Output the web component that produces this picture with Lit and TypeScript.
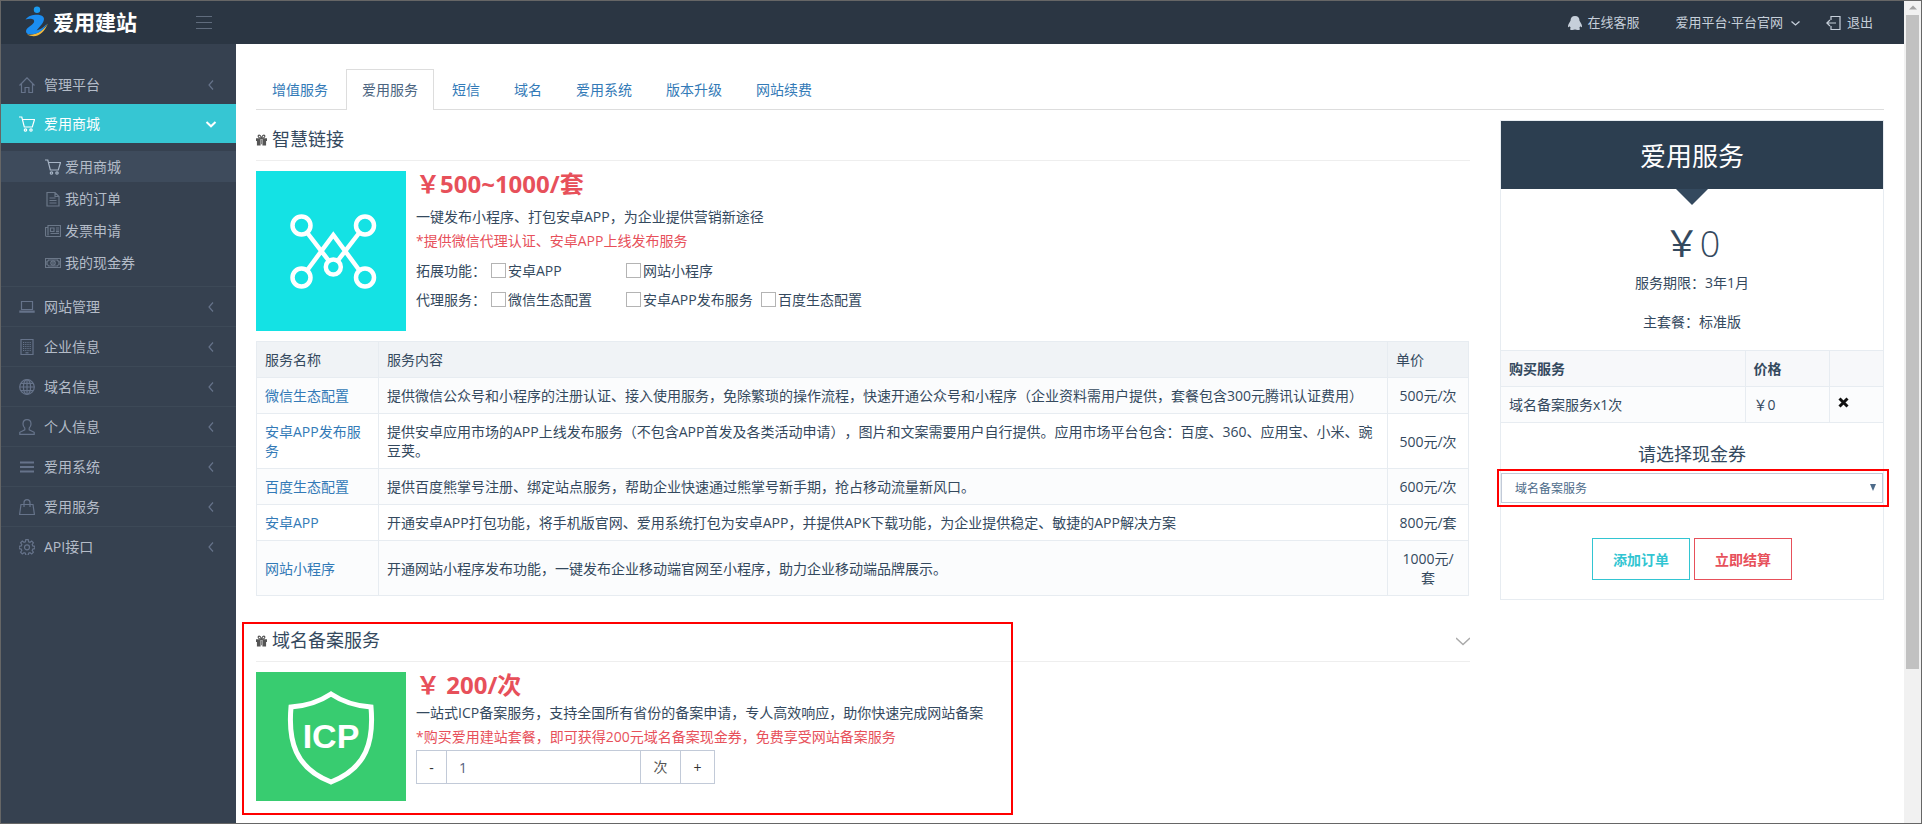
import { LitElement, html, css, svg } from "lit";
import { customElement, state } from "lit/decorators.js";

const line = (d: any, cls = "ico") => html`<svg class=${cls} viewBox="0 0 16 16" aria-hidden="true">${d}</svg>`;

const icons: Record<string, any> = {
  home: svg`<path d="M.5 8.500 8 .8l7.500 7.700M2.500 7v8.500h3.600v-5h3.800v5h3.600V7"/>`,
  cart: svg`<path d="M0 1h2.800l2.500 10h8l2.200-7.500H3.500"/><circle cx="6.500" cy="14" r="1.200"/><circle cx="12" cy="14" r="1.200"/>`,
  doc: svg`<path d="M2 1.500h8l4 4v9.500H2zM10 1.500v4h4M4.500 7h6M4.500 9.500h7M4.500 12h7"/>`,
  news: svg`<path d="M3 2.500h12.500v11H2q-1.500 0-1.500-1.500V4.500H3zM3 4.500v8M5.500 5h3.500v3.500H5.500zM11 5h3M11 7h3M5.500 10.500H14M11 8.700h3"/>`,
  cash: svg`<path d="M.5 3.500h15v9H.5zM2 6.500q1.200-.3 1.500-1.500h9q.3 1.200 1.500 1.500v3q-1.200.3-1.500 1.500h-9Q3.200 9.800 2 9.500z"/><circle cx="8" cy="8" r="2.200"/><path d="M8 6.800v2.400"/>`,
  laptop: svg`<path d="M2.500 2.500h11v8h-11zM.3 13.200h15.400M.3 12h15.400"/>`,
  building: svg`<path d="M2 .5h12v15H2z"/><path stroke-dasharray="1.200 1" d="M4 3.500h8.500M4 5.500h8.500M4 7.500h8.500M4 9.500h8.500M4 11.500h8.500"/><path d="M6.500 13.800h3"/>`,
  globe: svg`<circle cx="8" cy="8" r="7.300"/><ellipse cx="8" cy="8" rx="3.600" ry="7.300"/><path d="M8 .7v14.600M.7 8h14.600M1.800 4.300h12.400M1.800 11.700h12.400"/>`,
  user: svg`<path d="M8 .6c-2.500 0-4 1.900-4 4.300 0 2 .9 3.300 1.800 4.300v1.600L.8 13.300v2.100h14.400v-2.100l-5-2.500V9.200C11.100 8.200 12 6.900 12 4.900 12 2.500 10.500.6 8 .6z"/>`,
  bars: svg`<path stroke-width="2" d="M1 3.500h14M1 8h14M1 12.500h14"/>`,
  bag: svg`<path d="M2 5.500h12l1.400 10H.6zM5 8V3.700C5 1.800 6.200.6 8 .6s3 1.200 3 3.100V8"/>`,
  gear: svg`<path d="M6.800.7h2.400l.4 2 1.400.6 1.700-1.200 1.700 1.700-1.200 1.700.6 1.400 2 .4v2.400l-2 .4-.6 1.400 1.200 1.700-1.700 1.700-1.700-1.200-1.400.6-.4 2H6.800l-.4-2-1.400-.6-1.700 1.200-1.700-1.700 1.200-1.700-.6-1.400-2-.4V7.300l2-.4.6-1.400-1.200-1.700 1.700-1.700L5 3.300l1.400-.6z"/><circle cx="8" cy="8.300" r="2.500"/>`,
  left: svg`<path d="M10 3.500 6 8l4 4.500"/>`,
  down: svg`<path stroke-width="2" d="M3.500 6 8 10.300 12.500 6"/>`,
  logout: svg`<path d="M5 5V1.500h9v13H5V11M.8 8H10M4 5 .8 8 4 11"/>`,
};

const gift = html`<svg class="gift" viewBox="0 0 12 12" aria-hidden="true">
  <path d="M0 4h5V3h2v1h5v3h-1v5H7V5H5v7H1V7H0z" fill="#555"/>
  <path d="M6 4C2 4 1.500.7 3.500.7 5 .7 5.500 2.500 6 4c.5-1.500 1-3.300 2.500-3.300C10.500.7 10 4 6 4z" fill="none" stroke="#555" stroke-width="1.200"/>
  <path d="M5.500 5.500h1v5h-1z" fill="#777"/></svg>`;

const MENU: [string, string][] = [
  ["laptop", "网站管理"], ["building", "企业信息"], ["globe", "域名信息"], ["user", "个人信息"],
  ["bars", "爱用系统"], ["bag", "爱用服务"], ["gear", "API接口"],
];
const SUB: [string, string][] = [["cart", "爱用商城"], ["doc", "我的订单"], ["news", "发票申请"], ["cash", "我的现金券"]];
const TABS = ["增值服务", "爱用服务", "短信", "域名", "爱用系统", "版本升级", "网站续费"];
const ROWS = [
  ["微信生态配置", "提供微信公众号和小程序的注册认证、接入使用服务，免除繁琐的操作流程，快速开通公众号和小程序（企业资料需用户提供，套餐包含300元腾讯认证费用）", "500元/次"],
  ["安卓APP发布服务", "提供安卓应用市场的APP上线发布服务（不包含APP首发及各类活动申请），图片和文案需要用户自行提供。应用市场平台包含：百度、360、应用宝、小米、豌豆荚。", "500元/次"],
  ["百度生态配置", "提供百度熊掌号注册、绑定站点服务，帮助企业快速通过熊掌号新手期，抢占移动流量新风口。", "600元/次"],
  ["安卓APP", "开通安卓APP打包功能，将手机版官网、爱用系统打包为安卓APP，并提供APK下载功能，为企业提供稳定、敏捷的APP解决方案", "800元/套"],
  ["网站小程序", "开通网站小程序发布功能，一键发布企业移动端官网至小程序，助力企业移动端品牌展示。", "1000元/套"],
];

@customElement("app-root")
export class AppRoot extends LitElement {
  @state() private tab = 1;
  @state() private count = 1;

  static styles = css`
    :host { display: block; font: 14px/19px "Open Sans", "Noto Sans CJK SC", sans-serif; color: #34495e; text-spacing-trim: space-all; }
    * { box-sizing: border-box; }
    a { color: inherit; text-decoration: none; }
    h1, h2, h3, p, ul { margin: 0; padding: 0; font-weight: 400; }
    ul { list-style: none; }
    button, input, select { font: inherit; margin: 0; border-radius: 0; }
    svg { display: block; flex: none; }
    .ico { width: 16px; height: 16px; fill: none; stroke: currentColor; stroke-width: 1.2; }
    .frame { display: flex; height: 100vh; border: 1px solid #666; overflow: hidden; background: #fff; }
    .app { flex: 1; min-width: 0; display: flex; flex-direction: column; }
    .top { display: flex; align-items: center; height: 43px; flex: none; background: #2b3643; color: #c6cfda; font-size: 13px; padding-right: 31px; }
    .brand { display: flex; align-items: center; gap: 4px; width: 195px; padding-left: 22px; color: #fff; }
    .brand svg { width: 26px; height: 34px; }
    .brand span { font-size: 21px; line-height: 30px; font-weight: 700; padding-bottom: 2px; }
    .burger { display: block; border: 0; padding: 0; background: none; color: #606c7d; }
    .burger svg { width: 16px; height: 16px; stroke: currentColor; }
    .nav { margin-left: auto; display: flex; align-items: center; }
    .nav a { display: flex; align-items: center; gap: 6px; margin-left: 36px; }
    .nav a:last-child { margin-left: 25px; gap: 5px; }
    .body { flex: 1; min-height: 0; display: flex; }
    .side { width: 235px; flex: none; background: #364150; color: #b4bcc8; padding-top: 20px; }
    .item { display: flex; align-items: center; height: 40px; padding: 0 17px 0 18px; border-top: 1px solid #3d4957; }
    .item .ico { color: #66738a; }
    .item span { flex: 1; margin-left: 9px; }
    .item.first { border-top-color: #364150; }
    .item.on { height: 39px; background: #36c6d3; border: 0; color: #fff; }
    .item.on .ico { color: #fff; }
    .sub { padding: 8px 0 7px; }
    .sub a { display: flex; align-items: center; gap: 4px; height: 31px; margin-bottom: 1px; padding-left: 44px; }
    .sub a .ico { color: #6b7788; }
    .sub a.on { background: #3e4b5c; }
    .sub a.on .ico { color: #a7b5c6; }
    .main { flex: 1; min-width: 0; padding: 25px 20px 0; overflow: hidden; }
    .tabs { display: flex; gap: 2px; border-bottom: 1px solid #ddd; }
    .tab { height: 40px; padding: 0 15px; border: 1px solid transparent; border-bottom: 0; background: none; color: #337ab7; cursor: pointer; margin-bottom: -1px; }
    .tab.on { border-color: #ddd; background: #fff; color: #4b6480; height: 41px; padding-bottom: 2px; }
    .cols { display: flex; align-items: flex-start; justify-content: space-between; gap: 30px; }
    .left { flex: 1; min-width: 0; }
    .head { display: flex; align-items: center; gap: 5px; height: 41px; border-bottom: 1px solid #eee; margin-bottom: 10px; }
    .left > .head { margin-top: 10px; }
    .head h2 { font-size: 18px; line-height: 26px; flex: 1; padding-bottom: 2px; }
    .gift { width: 11px; height: 12px; }
    .offer { display: flex; gap: 10px; }
    .pic { width: 150px; height: 160px; }
    .pic.short { height: 129px; }
    .price { font-size: 24px; line-height: 26px; font-weight: 700; color: #e7505a; }
    .info p { line-height: 24px; }
    .info .gap { margin-top: 8px; }
    .info .near { margin-top: 3px; }
    .red { color: #e7505a; }
    .opts { display: grid; grid-template-columns: 75px 135px 135px 135px; align-items: center; height: 29px; }
    .opts.a { margin-top: 3px; }
    .opts label { display: flex; align-items: center; gap: 2px; white-space: nowrap; }
    .opts input { appearance: none; width: 15px; height: 15px; border: 1px solid #b4b4b4; background: #fff; }
    .opts input:checked { background: #36c6d3; }
    table { border-collapse: collapse; width: 100%; table-layout: fixed; }
    th, td { border: 1px solid #e7ecf1; padding: 8px; text-align: left; font-weight: 400; }
    .svc { margin-top: 10px; width: calc(100% - 1px); }
    .svc th { background: #f0f3f6; }
    .svc tbody tr:nth-child(odd) { background: #fbfcfd; }
    .svc td a { color: #337ab7; }
    .svc td:last-child { text-align: center; }
    .c1 { width: 122px; } .c3 { width: 81px; }
    .domain { margin-top: 25px; position: relative; }
    .mark { position: absolute; border: 2px solid #f00; pointer-events: none; }
    .domain .mark { left: -14px; top: 1px; width: 771px; height: 193px; }
    .stepper { display: flex; width: 299px; height: 34px; margin-top: 1px; }
    .stepper > * { border: 1px solid #c2cad8; background: #fff; color: #333; text-align: center; padding: 0; width: 34px; }
    .stepper > :first-child { width: 31px; }
    .stepper input { flex: 1; min-width: 0; width: auto; text-align: left; padding: 0 12px; color: #555f80; border-left: 0; }
    .stepper span { width: 40px; line-height: 32px; color: #555; border-left: 0; }
    .stepper > :last-child { border-left: 0; }
    .card { width: 384px; flex: none; margin-top: 10px; border: 1px solid #e7ecf1; text-align: center; padding-bottom: 19px; }
    .card h1 { background: #2c3e50; color: #fff; font-size: 26px; line-height: 66px; padding-top: 2px; }
    .tri { width: 32px; height: 16px; margin: 0 auto; background: #34495e; clip-path: polygon(0 0, 100% 0, 50% 100%); }
    .total { font-size: 36px; line-height: 48px; font-weight: 300; margin-top: 15px; }
    .total span { font-weight: 400; }
    .card .t1 { margin-top: 5px; }
    .card .t2 { margin-top: 20px; }
    .cart { margin-top: 19px; }
    .cart th { background: #f7f8fa; font-weight: 700; }
    .cart td { background: #fbfcfd; }
    .cart tr > :first-child { border-left-width: 0; }
    .cart tr > :last-child { border-right-width: 0; }
    .k2 { width: 84px; } .k3 { width: 54px; }
    .x { border: 0; background: none; padding: 0; display: block; color: #111; }
    .x svg { width: 11px; height: 11px; margin-bottom: 4px; }
    .card h3 { font-size: 18px; line-height: 24px; margin-top: 19px; }
    .pick { position: relative; margin-top: 7px; display: block; }
    .pick select { appearance: none; display: block; width: 100%; height: 30px; border: 1px solid #c2cad8; background: #fff; color: #4d6b8a; font-size: 12px; padding: 0 13px; }
    .pick svg { position: absolute; right: 7px; top: 11px; width: 6px; height: 7px; }
    .pick .mark { left: -4px; top: -4px; right: -6px; bottom: -4px; }
    .acts { display: flex; justify-content: center; gap: 4px; margin-top: 35px; }
    .acts button { height: 42px; padding: 0 20px; font-weight: 700; background: #fff; border: 1px solid #32c5d2; color: #32c5d2; }
    .acts button + button { border-color: #e7505a; color: #e7505a; }
    .scroll { width: 17px; flex: none; background: #f1f1f1; padding: 0 2px; display: flex; flex-direction: column; align-items: center; }
    .scroll svg { width: 8px; height: 14px; }
    .thumb { width: 13px; flex: 81; background: #c1c1c1; }
    .rest { flex: 19; }
  `;

  private menuItem(icon: string, label: string, cls = "") {
    return html`<a href="#" class="item ${cls}">${line(icons[icon])}<span>${label}</span>${line(icons[cls === "on" ? "down" : "left"])}</a>`;
  }

  private option(label: string) {
    return html`<label><input type="checkbox" />${label}</label>`;
  }

  render() {
    return html`<div class="frame">
      <div class="app">
        <header class="top">
          <a class="brand" href="#">
            <svg viewBox="0 0 26 34" aria-hidden="true">
              <path d="M4 28.500C12 29.500 19 26 25 17.500 21 27 14 33.500 4 28.500z" fill="#f3b93c"/>
              <circle cx="14" cy="3.700" r="3.200" fill="#1b9bf0"/>
              <path d="M2.500 13.500C6 9 12 8.500 16.500 9c5.500.8 5.500 5 2.500 9l-5.500 6.500C17.500 23.500 20.500 21.500 24 17.500 21 23.500 17 27.500 10 28.200 6 28.600 3 28 3 25.200 3 21.500 9 20 11 16.200 12 13 8 12 2.500 13.500z" fill="#1b8df0"/>
            </svg><span>爱用建站</span></a>
          <button class="burger" aria-label="菜单"><svg viewBox="0 0 16 16"><path d="M0 1.500h16M0 7.500h16M0 13.500h16"/></svg></button>
          <nav class="nav">
            <a href="#"><svg width="14" height="14" viewBox="0 0 14 14" fill="#c6cfda"><path d="M7 0C4 0 2.500 2 2.500 4.800L.6 8c-.9 1.800-.7 3.400 0 3.200l1.200-1 .8 1.500L2 13.300c0 .9 3.600.9 5 .2 1.400.7 5 .7 5-.2l-.6-1.600.8-1.500 1.200 1c.7.2.9-1.400 0-3.200l-1.900-3.200C11.500 2 10 0 7 0z"/></svg>在线客服</a>
            <a href="#">爱用平台·平台官网<svg width="12" height="12" viewBox="0 0 12 12" fill="none" stroke="#c6cfda" stroke-width="1.300"><path d="M2.500 4.500 6.500 8l4-3.500"/></svg></a>
            <a href="#">${line(icons.logout)}退出</a>
          </nav>
        </header>
        <div class="body">
          <nav class="side">
            ${this.menuItem("home", "管理平台", "first")}
            ${this.menuItem("cart", "爱用商城", "on")}
            <div class="sub">${SUB.map(([i, l], n) => html`<a href="#" class=${n ? "" : "on"}>${line(icons[i])}${l}</a>`)}</div>
            ${MENU.map(([i, l]) => this.menuItem(i, l))}
          </nav>
          <main class="main">
            <div class="tabs" role="tablist">
              ${TABS.map((t, n) => html`<button role="tab" aria-selected=${n === this.tab} class="tab ${n === this.tab ? "on" : ""}" @click=${() => (this.tab = n)}>${t}</button>`)}
            </div>
            <div class="cols">
              <div class="left">
                <div class="head">${gift}<h2>智慧链接</h2></div>
                <div class="offer">
                  <svg class="pic" viewBox="0 0 150 160" aria-hidden="true">
                    <rect width="150" height="160" fill="#14e2e4"/>
                    <g fill="none" stroke="#fff" stroke-width="4.500">
                      <circle cx="45.500" cy="54.500" r="9"/><circle cx="109" cy="54.500" r="9"/>
                      <circle cx="45.500" cy="106.500" r="9"/><circle cx="109" cy="106.500" r="9"/><circle cx="77.300" cy="96" r="7.500"/>
                      <path d="M51 61.500 73 90M103.500 61.500 81.500 90M51 99.500 77.300 64l26.200 35.500"/>
                    </g>
                  </svg>
                  <div class="info">
                    <div class="price">￥500~1000/套</div>
                    <p class="gap">一键发布小程序、打包安卓APP，为企业提供营销新途径</p>
                    <p class="red">*提供微信代理认证、安卓APP上线发布服务</p>
                    <div class="opts a"><span>拓展功能：</span>${this.option("安卓APP")}${this.option("网站小程序")}</div>
                    <div class="opts"><span>代理服务：</span>${this.option("微信生态配置")}${this.option("安卓APP发布服务")}${this.option("百度生态配置")}</div>
                  </div>
                </div>
                <table class="svc">
                  <colgroup><col class="c1" /><col /><col class="c3" /></colgroup>
                  <thead><tr><th>服务名称</th><th>服务内容</th><th>单价</th></tr></thead>
                  <tbody>${ROWS.map((r) => html`<tr><td><a href="#">${r[0]}</a></td><td>${r[1]}</td><td>${r[2]}</td></tr>`)}</tbody>
                </table>
                <section class="domain">
                  <div class="head">${gift}<h2>域名备案服务</h2>
                    <svg width="14" height="14" viewBox="0 0 14 14" fill="none" stroke="#aaa" stroke-width="1.500"><path d="m0 4 7 6.500L14 4"/></svg></div>
                  <div class="offer">
                    <svg class="pic short" viewBox="0 0 150 129" aria-hidden="true">
                      <rect width="150" height="129" fill="#38cc70"/>
                      <path d="M75 22c12 8 25 12 40 13 3 34-4 61-40 75-36-14-43-41-40-75 15-1 28-5 40-13z" fill="none" stroke="#fff" stroke-width="5"/>
                      <text x="75" y="76" text-anchor="middle" font-family="Liberation Sans, sans-serif" font-weight="700" font-size="34" fill="#fff">ICP</text>
                    </svg>
                    <div class="info">
                      <div class="price">￥ 200/次</div>
                      <p class="near">一站式ICP备案服务，支持全国所有省份的备案申请，专人高效响应，助你快速完成网站备案</p>
                      <p class="red">*购买爱用建站套餐，即可获得200元域名备案现金券，免费享受网站备案服务</p>
                      <div class="stepper">
                        <button @click=${() => (this.count = Math.max(1, this.count - 1))}>-</button>
                        <input aria-label="数量" .value=${String(this.count)} /><span>次</span>
                        <button @click=${() => this.count++}>+</button>
                      </div>
                    </div>
                  </div>
                  <div class="mark"></div>
                </section>
              </div>
              <aside class="card">
                <h1>爱用服务</h1>
                <div class="tri"></div>
                <div class="total"><span>￥</span>0</div>
                <p class="t1">服务期限：3年1月</p>
                <p class="t2">主套餐：标准版</p>
                <table class="cart">
                  <colgroup><col /><col class="k2" /><col class="k3" /></colgroup>
                  <thead><tr><th>购买服务</th><th>价格</th><th></th></tr></thead>
                  <tbody><tr><td>域名备案服务x1次</td><td>￥0</td><td><button class="x" aria-label="删除"><svg viewBox="0 0 11 11"><path d="m1.500 1.500 8 8m0-8-8 8" stroke="currentColor" stroke-width="3"/></svg></button></td></tr></tbody>
                </table>
                <h3><label for="coupon">请选择现金券</label></h3>
                <div class="pick">
                  <select id="coupon"><option>域名备案服务</option></select>
                  <svg viewBox="0 0 6 7"><path d="M0 0h6L3 7z" fill="#4d6b8a"/></svg>
                  <div class="mark"></div>
                </div>
                <div class="acts"><button>添加订单</button><button>立即结算</button></div>
              </aside>
            </div>
          </main>
        </div>
      </div>
      <div class="scroll" aria-hidden="true"><svg viewBox="0 0 8 14"><path d="M4 4.500 8 8.500H0z" fill="#a3a3a3"/></svg><div class="thumb"></div><div class="rest"></div></div>
    </div>`;
  }
}
